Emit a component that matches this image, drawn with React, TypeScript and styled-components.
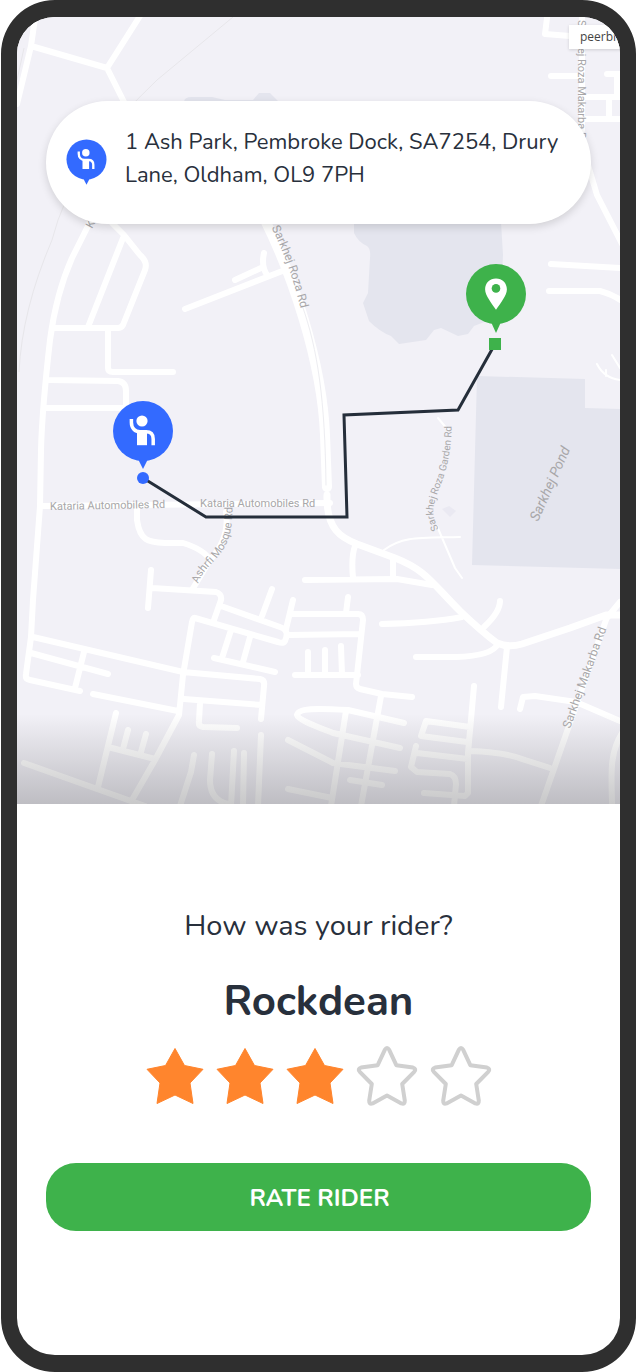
import React, { useState } from "react";
import styled, { createGlobalStyle } from "styled-components";

const colors = {
  frame: "#2f2f2f",
  ink: "#28303c",
  green: "#3eb24b",
  blue: "#336aff",
  orange: "#ff852d",
  outline: "#d0d0d0",
  land: "#f2f1f7",
  water: "#e4e5ee",
  label: "#a8a7a9",
};

const GlobalStyle = createGlobalStyle`
  * { box-sizing: border-box; }
  body {
    margin: 0;
    background: #fff;
    color: ${colors.ink};
    font-family: Nunito, "Open Sans", "Noto Sans", sans-serif;
  }
`;

const Phone = styled.main`
  margin: 0 1px;
  border: 17px solid ${colors.frame};
  border-width: 17px 16px;
  border-radius: 54px;
  overflow: hidden;
  background: #fff;
`;

const MapArea = styled.section`
  position: relative;
  aspect-ratio: 603 / 787;
  padding: 84px 29px 0;
  overflow: hidden;
  background: ${colors.land};
`;

const MapCanvas = styled.svg`
  position: absolute;
  inset: 0;
  width: 100%;
  height: 100%;
`;

const MapTag = styled.span`
  position: absolute;
  top: 8px;
  right: 0;
  width: 51px;
  height: 24px;
  padding-left: 11px;
  overflow: hidden;
  background: #fff;
  box-shadow: 0 1px 3px rgba(0, 0, 0, 0.15);
  color: #444;
  font: 400 12px/24px "Open Sans", sans-serif;
`;

const AddressCard = styled.address`
  position: relative;
  display: flex;
  align-items: center;
  gap: 18px;
  min-height: 123px;
  padding: 12px 20px 20px;
  border-radius: 62px;
  background: #fff;
  box-shadow: 0 3px 8px rgba(0, 0, 0, 0.14);
  font-style: normal;
  font-size: 22px;
  font-weight: 400;
  line-height: 33px;
`;

const AddressIcon = styled.svg`
  flex: none;
  width: 41px;
  height: 48px;
  margin-top: 8px;
`;

const RatingPanel = styled.form`
  display: flex;
  flex-direction: column;
  align-items: center;
  padding: 102px 29px 124px;
`;

const Question = styled.p`
  margin: 0 0 28px;
  font-size: 29px;
  font-weight: 400;
  line-height: 40px;
`;

const RiderName = styled.h1`
  margin: 0 0 16px;
  font-size: 42px;
  font-weight: 700;
  line-height: 56px;
`;

const StarRow = styled.fieldset`
  display: flex;
  gap: 14px;
  margin: 0 0 57px;
  padding: 0;
  border: 0;
`;

const StarLabel = styled.label`
  display: block;
  height: 60px;
  border-radius: 8px;
  cursor: pointer;
  &:focus-within { outline: 2px solid ${colors.blue}; }
`;

const StarInput = styled.input`
  position: absolute;
  width: 1px;
  height: 1px;
  margin: 0;
  opacity: 0;
`;

const StarIcon = styled.svg<{ $filled: boolean }>`
  display: block;
  width: ${(p) => (p.$filled ? 56 : 60)}px;
  height: 60px;
  fill: ${(p) => (p.$filled ? colors.orange : "none")};
  stroke: ${(p) => (p.$filled ? colors.orange : colors.outline)};
  stroke-width: ${(p) => (p.$filled ? 1 : 4)};
  stroke-linejoin: round;
  overflow: visible;
`;

const RateButton = styled.button`
  align-self: stretch;
  height: 68px;
  padding: 2px 0 0 2px;
  border: 0;
  border-radius: 30px;
  background: ${colors.green};
  color: #fff;
  font-family: inherit;
  font-size: 24px;
  font-weight: 700;
  cursor: pointer;
`;

const Rider = () => (
  <g>
    <path d="M-5 28 L5 28 L0 38 Z" fill={colors.blue} />
    <circle r="30" fill={colors.blue} />
    <circle cx="-1" cy="-10" r="5.6" fill="#fff" />
    <path d="M-6-.8H4V14.2H-6Z" fill="#fff" />
    <path
      d="M-11.6-12V-8.5C-11.6-3-8 .8-3 .8H3C8 .8 10.2 3.5 10.2 8V14.2"
      fill="none"
      stroke="#fff"
      strokeWidth="3.5"
    />
    <path d="M5.2 3V14" stroke={colors.blue} strokeWidth="1" />
  </g>
);

const roads = `
  M35 18 L31 46 L17 104 M31 46 L107 68 L140 16 M107 68 L128 110
  M90 222 L72 258 C60 285 54 310 50 340 C46 375 42 410 41 450 L40 506 L33 600 L31 637 L26 674 Q25 679 30 680 L80 691
  M112 223 L124 235 L140 255 Q148 262 145 270 L123 325 Q121 328 118 328 H53 M123 238 L88 327
  M108 330 V368 Q108 372 113 372 H173 M49 380 L118 381 Q126 382 126 391 V410 M44 408 H126
  M185 309 L285 270 M235 280 L261 268 M264 253 Q261 266 267 275
  M42 506 L330 503 M137 508 V520 C140 541 148 542 165 543 H183 C196 547 206 553 210 560 L192 590
  M226 512 Q230 538 210 560
  M151 570 L148 608 M152 588 L216 592 Q222 594 221 600 L214 620
  M272 589 L262 616 M293 600 L286 629
  M221 606 L280 627 Q290 630 285 641 Q283 644 278 642 L195 618 Q193 617 192 622 L183 675 L179 715 L155 760 L132 800
  M231 630 L222 658 M250 637 L243 662 M214 658 L275 672
  M291 614 H358 Q363 614 363 620 L356 684 Q356 688 360 689 L382 694 L412 697
  M289 635 L361 634 M348 597 L346 613 M308 652 V675 M325 650 V675 M341 646 L342 675 M295 675 H358
  M33 637 L183 672 L260 679 Q265 680 264 686 L261 719 M31 653 L108 674 M84 652 L75 688 M93 694 L178 711
  M184 699 L262 705 M200 703 L199 721 Q198 726 203 727 L237 728
  M116 713 L98 787 M128 730 L123 749 M146 734 L141 752 M108 747 L155 759 M24 763 L145 806
  M194 755 L191 772 L180 806 M212 754 L210 780 Q210 800 228 804
  M234 751 L231 806 M244 753 L243 806 M261 735 L258 806
  M404 723 L348 710 C315 708 298 708 297 715 C298 720 318 727 333 733 L400 748
  M346 711 L331 806 M381 696 L361 806 M288 740 L333 763 L395 771 M350 780 L382 785 M288 789 L332 798
  M305 580 L397 579 L432 585 M355 546 Q351 557 353 578 M393 560 V578
  M382 624 Q430 623 462 617 M500 601 Q500 612 484 627 M416 657 H456 Q492 656 498 644
  M507 647 L501 707 M474 686 L468 753 M468 755 V793 L465 796 L424 793
  M421 736 L426 721 L470 727 M421 736 L467 742 M417 753 L468 759
  M416 746 L411 767 L417 772 L450 774 Q456 776 456 784 L454 806
  M470 751 Q505 752 525 760 L550 768 M520 709 L523 697 L535 696 L576 702 L620 721
  M606 619 L620 602 M607 617 L541 806 M622 733 C608 755 612 780 612 806
  M547 18 L545 34 L570 36 M551 76 H580 M582 16 V130
  M607 74 H622 M617 74 V97 M585 97 H619 M609 97 V118 M585 119 H622
  M588 165 L597 195 L622 244 M551 264 L622 268 M549 291 H600 Q612 294 622 301
`;

const StreetMap = () => (
  <MapCanvas viewBox="17 17 603 787" preserveAspectRatio="xMidYMid slice" role="img" aria-label="Route map">
    <defs>
      <linearGradient id="shade" x1="0" y1="0" x2="0" y2="1">
        <stop offset="0" stopColor="#101014" stopOpacity="0" />
        <stop offset="1" stopColor="#101014" stopOpacity="0.23" />
      </linearGradient>
      <path id="rozaRd" d="M265 214 C286 256 294 280 305 326" />
      <path id="mosqueRd" d="M198 584 C207 557 236 560 232 500" />
      <path id="gardenRd" d="M439 529 C420 499 456 486 451 414" />
      <path id="makarbaRd" d="M570 729 L611 616" />
    </defs>
    <g fill={colors.water}>
      <path d="M184 102 Q184 97 192 97 L212 97 L225 100 H253 L259 93 H270 L279 102 Z" />
      <path d="M354 222 V233 Q358 242 367 246 Q371 249 370 258 L368 293 L363 303 L369 321 Q380 332 391 336 L399 344 L426 340 L434 330 L441 328 L458 336 L468 334 L474 326 L500 316 L503 255 L501 222 Z" />
      <path d="M477 376 L585 379 V408 L622 409 V569 L472 565 Z" />
      <path d="M442 509 L449 506 L456 511 L450 517 Z" opacity=".6" />
    </g>
    <g fill="none" stroke="#e7e6ea">
      <path d="M233 17 L157 80 Q72 160 52 240 Q22 310 19 372" />
      <path d="M24 48 L17 80" />
    </g>
    <g fill="none" stroke="#fff" strokeLinecap="round" strokeLinejoin="round">
      <path d={roads} strokeWidth="6" />
      <path d="M327 495 C326 530 342 538 357 544 L395 558 C426 570 432 583 460 611 Q482 632 497 643 Q508 648 522 644 L570 628 L606 615 H622" strokeWidth="7" />
      <path d="M264 218 C291 272 322 360 325 435 L327 487" strokeWidth="10" />
      <path d="M384 550 C403 536 420 538 460 537 M438 418 L448 430 M437 526 L455 568 L462 578 M597 364 Q604 378 620 380 M606 370 V376 M612 355 L620 368" strokeWidth="2" />
      <path d="M302 305 C318 350 325 400 326 485" stroke="#ededf1" strokeWidth="1" />
    </g>
    <rect x="17" y="714" width="603" height="90" fill="url(#shade)" />
    <g fill={colors.label} fontFamily="Roboto, sans-serif" fontSize="11">
      <text transform="translate(50 510) rotate(-1)">Kataria Automobiles Rd</text>
      <text x="200" y="507">Kataria Automobiles Rd</text>
      <text fontSize="12"><textPath href="#rozaRd" startOffset="15">Sarkhej Roza Rd</textPath></text>
      <text><textPath href="#mosqueRd">Ashrfi Mosque Rd</textPath></text>
      <text fontSize="10"><textPath href="#gardenRd">Sarkhej Roza Garden Rd</textPath></text>
      <text fontSize="12"><textPath href="#makarbaRd">Sarkhej Makarba Rd</textPath></text>
      <text transform="translate(578 20) rotate(90)">Sarkhej Roza Makarba Rd</text>
      <text transform="translate(92 229) rotate(-62)">K</text>
      <text transform="translate(538 522) rotate(-66)" fontSize="14" fontStyle="italic">Sarkhej Pond</text>
    </g>
    <path d="M143 478 L206 517 H347 L344 415 L458 410 L495 344" fill="none" stroke="#252e3a" strokeWidth="3" />
    <circle cx="143" cy="478" r="6" fill={colors.blue} />
    <path d="M489 338 H501 V350 H489 Z" fill={colors.green} />
    <g transform="translate(143 431)"><Rider /></g>
    <g transform="translate(496 294)">
      <path d="M-5 28 L5 28 L0 39 Z" fill={colors.green} />
      <circle r="30" fill={colors.green} />
      <path
        d="M0-15.5C6.2-15.5 10.9-11 10.9-4.8C10.9 1.5 4.5 9 0 15.8C-4.5 9-10.9 1.5-10.9-4.8C-10.9-11-6.2-15.5 0-15.5Z"
        fill="#fff"
      />
      <circle cy="-5.6" r="4.3" fill={colors.green} />
    </g>
  </MapCanvas>
);

const starPath = {
  filled: "M28 2.5 L37.5 19.5 L56 23.3 L43 37 L46 57.5 L28 49 L10 57.5 L13 37 L0 23.3 L18.5 19.5 Z",
  outline:
    "M27.8 3.8Q30 .4 32.2 3.8L39.3 19.2L56 21.6Q59.8 22.8 57.2 25.8L45.2 38L47.8 54.6Q48 58.8 44.4 57.4L30 49.6L15.6 57.4Q12 58.8 12.2 54.6L14.8 38L2.8 25.8Q.2 22.8 4 21.6L20.7 19.2Z",
};

export default function App() {
  const [rating, setRating] = useState(3);
  return (
    <>
      <GlobalStyle />
      <Phone>
        <MapArea>
          <StreetMap />
          <MapTag>peerbit</MapTag>
          <AddressCard>
            <AddressIcon viewBox="-30.75 -30.75 61.5 72" aria-hidden="true"><Rider /></AddressIcon>
            <span>1 Ash Park, Pembroke Dock, SA7254, Drury Lane, Oldham, OL9 7PH</span>
          </AddressCard>
        </MapArea>
        <RatingPanel onSubmit={(e) => e.preventDefault()}>
          <Question>How was your rider?</Question>
          <RiderName>Rockdean</RiderName>
          <StarRow aria-label="Rating">
            {[1, 2, 3, 4, 5].map((n) => {
              const filled = n <= rating;
              return (
                <StarLabel key={n}>
                  <StarInput
                    type="radio"
                    name="rating"
                    value={n}
                    aria-label={`${n} of 5`}
                    checked={rating === n}
                    onChange={() => setRating(n)}
                  />
                  <StarIcon $filled={filled} viewBox={filled ? "0 0 56 60" : "0 0 60 60"} aria-hidden="true">
                    <path d={filled ? starPath.filled : starPath.outline} />
                  </StarIcon>
                </StarLabel>
              );
            })}
          </StarRow>
          <RateButton type="submit">RATE RIDER</RateButton>
        </RatingPanel>
      </Phone>
    </>
  );
}
